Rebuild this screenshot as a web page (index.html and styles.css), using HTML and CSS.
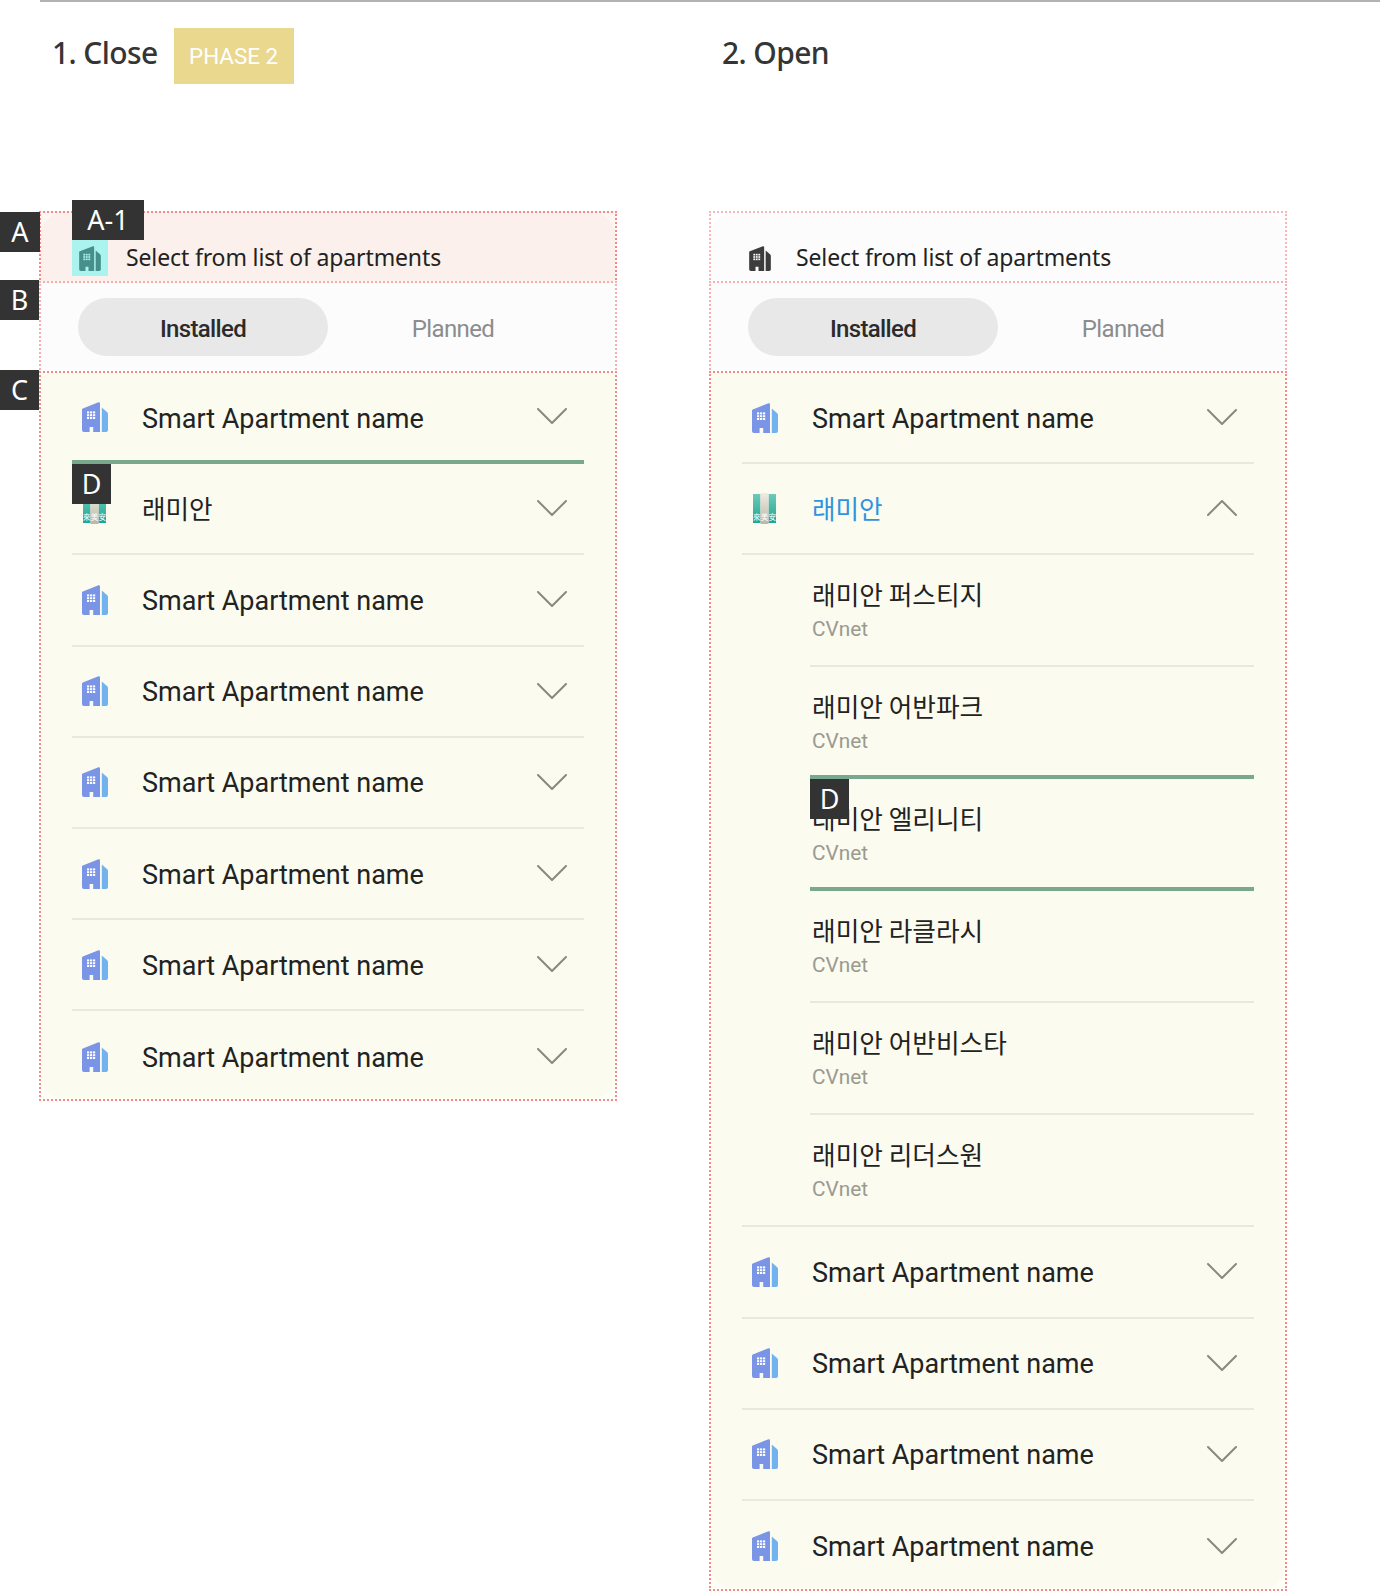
FILE: index.html
```html
<!DOCTYPE html>
<html lang="en">
<head>
<meta charset="utf-8">
<title>Apartment list</title>
<link rel="stylesheet" href="styles.css">
</head>
<body>
<svg class="defs" width="0" height="0" aria-hidden="true">
  <defs>
    <linearGradient id="teal" x1="0" y1="0" x2="0" y2="1"><stop offset="0" stop-color="#6ccab9"/><stop offset="1" stop-color="#1ea594"/></linearGradient>
    <linearGradient id="sand" x1="0" y1="0" x2="0" y2="1"><stop offset="0" stop-color="#efece2"/><stop offset="1" stop-color="#bdb6a4"/></linearGradient>
    <symbol id="bld" viewBox="0 0 26 30">
      <path class="b-main" d="M0 7.5Q0 6.7.8 6.4L16.5.2Q18 0 18 1.5V30H11.2V25H7.6V30H2Q0 30 0 28Z"/>
      <path class="b-side" d="M19.8 5.5L25 10Q26 11 26 12V28Q26 30 24 30H19.8Z"/>
      <g class="b-win"><rect x="5" y="9.4" width="2.2" height="2"/><rect x="8" y="9.4" width="2.2" height="2"/><rect x="11" y="9.4" width="2.2" height="2"/><rect x="5" y="12.2" width="2.2" height="2"/><rect x="8" y="12.2" width="2.2" height="2"/><rect x="11" y="12.2" width="2.2" height="2"/><rect x="5" y="15" width="2.2" height="2"/><rect x="8" y="15" width="2.2" height="2"/><rect x="11" y="15" width="2.2" height="2"/></g>
    </symbol>
    <symbol id="raem" viewBox="0 0 23 31">
      <rect x="0" y="1" width="7.5" height="29" fill="url(#teal)"/>
      <rect x="15.5" y="1" width="7.5" height="29" fill="url(#teal)"/>
      <rect x="7.5" y="0" width="8" height="31" fill="url(#sand)"/>
      <text class="raem-t" x="3.8" y="27">來</text>
      <text class="raem-t" x="11.5" y="27">美</text>
      <text class="raem-t" x="19.2" y="27">安</text>
    </symbol>
    <symbol id="down" viewBox="0 0 30 16"><path class="chev" d="M1 1L15 15L29 1"/></symbol>
    <symbol id="up" viewBox="0 0 30 16"><path class="chev" d="M1 15L15 1L29 15"/></symbol>
  </defs>
</svg>

<div class="rule"></div>
<main class="columns">

  <section class="col">
    <header class="head">
      <h2 class="title">1. Close</h2>
      <span class="phase">PHASE 2</span>
    </header>
    <div class="panel">
      <span class="tag tag-a">A</span>
      <div class="zone zone-a under-a">
        <div class="zone-fill fill-a round-top">
          <span class="tag tag-a1">A-1</span>
          <div class="select"><span class="sel-icon sel-hl"><svg class="i-sel i-sel-hl"><use href="#bld"/></svg></span><span class="sel-text">Select from list of apartments</span></div>
        </div>
      </div>
      <span class="tag tag-b">B</span>
      <div class="zone zone-b">
        <div class="zone-fill fill-b tabs"><span class="tab on">Installed</span><span class="tab">Planned</span></div>
      </div>
      <span class="tag tag-c">C</span>
      <div class="zone zone-c">
        <div class="zone-fill fill-c round-bottom list">
          <div class="row green"><svg class="i-bld"><use href="#bld"/></svg><span class="name">Smart Apartment name</span><svg class="i-chev"><use href="#down"/></svg></div>
          <div class="row">
            <span class="tag tag-d">D</span>
            <svg class="i-raem"><use href="#raem"/></svg><span class="name ko">래미안</span><svg class="i-chev"><use href="#down"/></svg></div>
          <div class="row"><svg class="i-bld"><use href="#bld"/></svg><span class="name">Smart Apartment name</span><svg class="i-chev"><use href="#down"/></svg></div>
          <div class="row"><svg class="i-bld"><use href="#bld"/></svg><span class="name">Smart Apartment name</span><svg class="i-chev"><use href="#down"/></svg></div>
          <div class="row"><svg class="i-bld"><use href="#bld"/></svg><span class="name">Smart Apartment name</span><svg class="i-chev"><use href="#down"/></svg></div>
          <div class="row"><svg class="i-bld"><use href="#bld"/></svg><span class="name">Smart Apartment name</span><svg class="i-chev"><use href="#down"/></svg></div>
          <div class="row"><svg class="i-bld"><use href="#bld"/></svg><span class="name">Smart Apartment name</span><svg class="i-chev"><use href="#down"/></svg></div>
          <div class="row last"><svg class="i-bld"><use href="#bld"/></svg><span class="name">Smart Apartment name</span><svg class="i-chev"><use href="#down"/></svg></div>
        </div>
      </div>
    </div>
  </section>

  <section class="col">
    <header class="head">
      <h2 class="title">2. Open</h2>
    </header>
    <div class="panel">
      <div class="zone zone-a faint">
        <div class="zone-fill fill-b round-top">
          <div class="select"><span class="sel-icon"><svg class="i-sel i-sel-dark"><use href="#bld"/></svg></span><span class="sel-text">Select from list of apartments</span></div>
        </div>
      </div>
      <div class="zone zone-b">
        <div class="zone-fill fill-b tabs"><span class="tab on">Installed</span><span class="tab">Planned</span></div>
      </div>
      <div class="zone zone-c">
        <div class="zone-fill fill-c round-bottom list">
          <div class="row"><svg class="i-bld"><use href="#bld"/></svg><span class="name">Smart Apartment name</span><svg class="i-chev"><use href="#down"/></svg></div>
          <div class="row"><svg class="i-raem"><use href="#raem"/></svg><span class="name ko active">래미안</span><svg class="i-chev"><use href="#up"/></svg></div>
          <div class="subs">
            <div class="sub"><span class="sub-name">래미안 퍼스티지</span><span class="sub-note">CVnet</span></div>
            <div class="sub green"><span class="sub-name">래미안 어반파크</span><span class="sub-note">CVnet</span></div>
            <div class="sub green"><span class="tag tag-d2">D</span><span class="sub-name">래미안 엘리니티</span><span class="sub-note">CVnet</span></div>
            <div class="sub"><span class="sub-name">래미안 라클라시</span><span class="sub-note">CVnet</span></div>
            <div class="sub"><span class="sub-name">래미안 어반비스타</span><span class="sub-note">CVnet</span></div>
            <div class="sub sub-end"><span class="sub-name">래미안 리더스원</span><span class="sub-note">CVnet</span></div>
          </div>
          <div class="row"><svg class="i-bld"><use href="#bld"/></svg><span class="name">Smart Apartment name</span><svg class="i-chev"><use href="#down"/></svg></div>
          <div class="row"><svg class="i-bld"><use href="#bld"/></svg><span class="name">Smart Apartment name</span><svg class="i-chev"><use href="#down"/></svg></div>
          <div class="row"><svg class="i-bld"><use href="#bld"/></svg><span class="name">Smart Apartment name</span><svg class="i-chev"><use href="#down"/></svg></div>
          <div class="row last"><svg class="i-bld"><use href="#bld"/></svg><span class="name">Smart Apartment name</span><svg class="i-chev"><use href="#down"/></svg></div>
        </div>
      </div>
    </div>
  </section>

</main>
</body>
</html>
```

FILE: styles.css
```css
* { box-sizing: border-box; }
html, body { margin: 0; padding: 0; background: #fff; }
body {
  width: 1380px;
  height: 1592px;
  overflow: hidden;
  font-family: Roboto, "Noto Sans CJK KR", sans-serif;
  color: #222;
}
.defs { position: absolute; }

.rule { height: 2px; margin-left: 40px; background: #b2b2b2; }

.columns { display: flex; gap: 92px; padding-left: 39px; }
.col { width: 578px; flex: none; }

.head {
  height: 209px;
  padding: 26px 0 0 13px;
  display: flex;
  align-items: flex-start;
  gap: 16px;
}
.title {
  margin: 0;
  font: 500 30px/50px "Noto Sans", sans-serif;
  letter-spacing: -0.6px;
  color: #353535;
}
.phase {
  width: 120px;
  height: 56px;
  background: #ead88f;
  color: #fff;
  font: 400 22.4px/56px Roboto, sans-serif;
  text-align: center;
}

.panel { position: relative; }

.zone { border: 2px dotted #f28a8a; position: relative; }
.zone-a { height: 72px; }
.under-a { background: #fdf6f2; }
.zone-b { height: 92px; margin-top: -2px; border-color: #f8aeae; }
.zone-c { margin-top: -2px; background: #fefef9; }
.faint { border-color: #f9b6b6; }
.zone-fill { height: 100%; }

.fill-a { background: #fbf0eb; }
.fill-b { background: #fcfcfc; }
.fill-c { background: #fbfbf0; }
.round-top { border-radius: 22px 22px 0 0; }
.round-bottom { border-radius: 0 0 22px 22px; }

.select { display: flex; align-items: center; height: 100%; padding: 22px 0 0 31px; }
.sel-icon { width: 36px; height: 36px; display: flex; align-items: center; justify-content: center; }
.sel-hl { background: #abf3ef; }
.sel-text {
  margin: 0 0 2px 18px;
  font: 400 23px/36px "Noto Sans", sans-serif;
  letter-spacing: -0.13px;
  color: #222;
}
.i-sel { width: 22px; height: 25px; }
.i-sel-hl { --main: #468f8a; --side: #468f8a; --win: #abf3ef; }
.i-sel-dark { --main: #3c3c3c; --side: #3c3c3c; --win: #fcfcfc; }

.b-main { fill: var(--main, #7a94e6); }
.b-side { fill: var(--side, #72b3ef); }
.b-win { fill: var(--win, #fff); }

.tabs {
  display: grid;
  grid-template-columns: 250px 250px;
  padding: 15px 0 0 37px;
}
.tab {
  height: 58px;
  border-radius: 29px;
  text-align: center;
  font: 400 24px/62px Roboto, sans-serif;
  letter-spacing: -0.65px;
  color: #8c8c8c;
}
.tab.on { background: #e8e8e8; color: #2b2b2b; font-weight: 500; }

.list { padding: 0 31px; }

.row {
  position: relative;
  height: 91.2px;
  display: flex;
  align-items: center;
  border-bottom: 2px solid #e9e9dd;
}
.row.last { height: 88px; padding-top: 3px; border-bottom: 0; }
.row.green { border-bottom: 4px solid #78a88e; }
.row.green .name { margin-top: 4px; }

.i-bld { width: 26px; height: 30px; margin-left: 9.5px; flex: none; }
.i-raem { width: 23px; height: 31px; margin-left: 11px; flex: none; }
.name {
  margin: 2px 0 0 34.5px;
  flex: 1;
  font: 400 27px/36px Roboto, "Noto Sans CJK KR", sans-serif;
  color: #222;
}
.i-raem + .name { margin-left: 36px; }
.ko { font-family: "Noto Sans CJK KR", sans-serif; font-size: 25.6px; margin-top: 0; margin-bottom: 1px; }
.active { color: #2f93dd; }
.i-chev { width: 30px; height: 16px; margin: 0 17px 1px 0; flex: none; }
.chev { fill: none; stroke: #8a8a7c; stroke-width: 2; stroke-linecap: round; stroke-linejoin: round; }

.subs { padding-left: 68px; }
.sub {
  position: relative;
  height: 112px;
  padding: 19px 0 0 2px;
  display: flex;
  flex-direction: column;
  border-bottom: 2px solid #e9e9dd;
}
.sub.green { border-bottom: 4px solid #78a88e; }
.sub-end { margin-left: -68px; padding-left: 70px; }
.sub-name {
  font: 400 25.7px/40px "Noto Sans CJK KR", sans-serif;
  color: #222;
}
.sub-note {
  font: 400 20.8px/30px Roboto, sans-serif;
  color: #9a9a90;
}

.tag {
  position: absolute;
  background: #333;
  color: #fff;
  font: 400 27px/40px "Noto Sans", sans-serif;
  text-align: center;
  height: 40px;
  z-index: 2;
}
.tag-a { left: -39px; top: 1px; width: 40px; }
.tag-b { left: -39px; top: 69px; width: 39px; }
.tag-c { left: -39px; top: 159px; width: 39px; }
.tag-a1 { left: 31px; top: -13px; width: 72px; }
.tag-d { left: 0; top: 0; width: 39px; }
.tag-d2 { left: 0; top: 0; width: 39px; }

.raem-t {
  font: 400 7.5px "Noto Sans CJK TC", sans-serif;
  fill: #fff;
  text-anchor: middle;
}
```
